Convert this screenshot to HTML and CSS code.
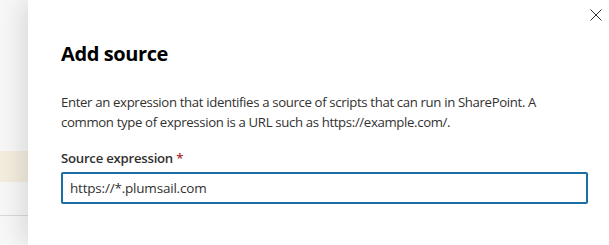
FILE: index.html
```html
<!DOCTYPE html>
<html>
<head>
<meta charset="utf-8">
<link rel="stylesheet" href="styles.css">
</head>
<body>
<div class="page">
  <div class="backdrop">
    <div class="bd-top"></div>
    <div class="bd-row bd-yellow"></div>
    <div class="bd-row bd-plain"></div>
    <div class="bd-rest"></div>
  </div>
  <div class="panel">
    <button class="close" aria-label="Close">
      <svg width="12" height="12" viewBox="0 0 12 12"><path d="M0.5 0.5 L11.5 11.5 M11.5 0.5 L0.5 11.5" stroke="#323130" stroke-width="1" fill="none"/></svg>
    </button>
    <h1 class="title">Add source</h1>
    <p class="desc">Enter an expression that identifies a source of scripts that can run in SharePoint. A common type of expression is a URL such as https://example.com/.</p>
    <label class="label">Source expression <span class="req">*</span></label>
    <div class="input">https://*.plumsail.com</div>
  </div>
</div>
</body>
</html>
```
FILE: styles.css
```css
html, body { margin: 0; padding: 0; }
body { background: #fff; font-family: "Segoe UI", "Open Sans", "Noto Sans", sans-serif; color: #323130; }
.page { display: flex; width: 609px; height: 245px; overflow: hidden; }
.backdrop { width: 28px; flex: none; display: flex; flex-direction: column; background: #f8f8f8; }
.bd-top { height: 151px; }
.bd-yellow { height: 31px; background: #f5eedf; }
.bd-plain { height: 33px; border-bottom: 1px solid #d9d9d9; }
.bd-rest { flex: 1; }
.panel { flex: 1; position: relative; background: #fff; box-shadow: -6px 0 26px rgba(0,0,0,0.13); padding: 0 21px 0 33px; z-index: 1; }
.close { position: absolute; top: 9px; right: 7px; width: 12px; height: 12px; padding: 0; border: 0; background: none; display: block; }
.close svg { display: block; }
.title { margin: 40px 0 0; font-size: 20px; line-height: 28px; font-weight: 700; color: #000; letter-spacing: -0.4px; }
.desc { margin: 24px 0 0; font-size: 13.2px; line-height: 20px; color: #323130; letter-spacing: -0.35px; }
.label { display: block; margin-top: 16px; font-size: 13.2px; line-height: 20px; font-weight: 600; color: #323130; letter-spacing: -0.25px; }
.req { color: #a4262c; }
.input { margin-top: 4px; height: 28px; border: 2px solid #1a6fa6; border-radius: 2px; padding: 0 7px; font-size: 13.5px; line-height: 28px; color: #323130; letter-spacing: -0.2px; }
```
